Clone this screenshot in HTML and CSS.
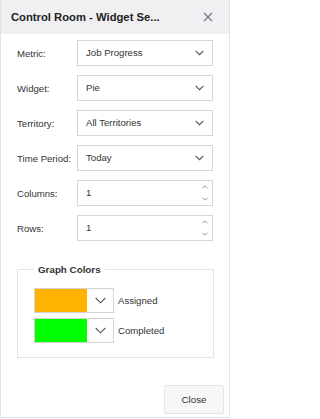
FILE: index.html
```html
<!DOCTYPE html>
<html>
<head>
<meta charset="utf-8">
<link rel="stylesheet" href="styles.css">
</head>
<body>
<div class="dialog">
  <div class="header">
    <span class="title">Control Room - Widget Se...</span>
    <svg class="close-x" width="10" height="10" viewBox="0 0 10 10"><path d="M1 1L9 9M9 1L1 9" stroke="#6f7c8e" stroke-width="1.2" fill="none"/></svg>
  </div>
  <div class="content">
    <div class="row">
      <span class="label">Metric:</span>
      <div class="field"><span class="value">Job Progress</span>
        <svg class="chev" width="9" height="6" viewBox="0 0 9 6"><path d="M0.6 0.8L4.5 4.7L8.4 0.8" stroke="#555" stroke-width="1.1" fill="none"/></svg></div>
    </div>
    <div class="row">
      <span class="label">Widget:</span>
      <div class="field"><span class="value">Pie</span>
        <svg class="chev" width="9" height="6" viewBox="0 0 9 6"><path d="M0.6 0.8L4.5 4.7L8.4 0.8" stroke="#555" stroke-width="1.1" fill="none"/></svg></div>
    </div>
    <div class="row">
      <span class="label">Territory:</span>
      <div class="field"><span class="value">All Territories</span>
        <svg class="chev" width="9" height="6" viewBox="0 0 9 6"><path d="M0.6 0.8L4.5 4.7L8.4 0.8" stroke="#555" stroke-width="1.1" fill="none"/></svg></div>
    </div>
    <div class="row">
      <span class="label">Time Period:</span>
      <div class="field"><span class="value">Today</span>
        <svg class="chev" width="9" height="6" viewBox="0 0 9 6"><path d="M0.6 0.8L4.5 4.7L8.4 0.8" stroke="#555" stroke-width="1.1" fill="none"/></svg></div>
    </div>
    <div class="row">
      <span class="label">Columns:</span>
      <div class="field"><span class="value">1</span>
        <div class="spin">
          <svg width="6" height="4" viewBox="0 0 6 4"><path d="M0.5 3.3L3 0.8L5.5 3.3" stroke="#888" stroke-width="0.9" fill="none"/></svg>
          <svg width="6" height="4" viewBox="0 0 6 4"><path d="M0.5 0.7L3 3.2L5.5 0.7" stroke="#888" stroke-width="0.9" fill="none"/></svg>
        </div></div>
    </div>
    <div class="row">
      <span class="label">Rows:</span>
      <div class="field"><span class="value">1</span>
        <div class="spin">
          <svg width="6" height="4" viewBox="0 0 6 4"><path d="M0.5 3.3L3 0.8L5.5 3.3" stroke="#888" stroke-width="0.9" fill="none"/></svg>
          <svg width="6" height="4" viewBox="0 0 6 4"><path d="M0.5 0.7L3 3.2L5.5 0.7" stroke="#888" stroke-width="0.9" fill="none"/></svg>
        </div></div>
    </div>
    <fieldset class="colors">
      <legend>Graph Colors</legend>
      <div class="color-row">
        <div class="picker"><span class="swatch orange"></span><span class="drop">
          <svg width="11" height="7" viewBox="0 0 11 7"><path d="M0.7 1L5.5 5.8L10.3 1" stroke="#555" stroke-width="1.1" fill="none"/></svg></span></div>
        <span class="clabel">Assigned</span>
      </div>
      <div class="color-row">
        <div class="picker"><span class="swatch green"></span><span class="drop">
          <svg width="11" height="7" viewBox="0 0 11 7"><path d="M0.7 1L5.5 5.8L10.3 1" stroke="#555" stroke-width="1.1" fill="none"/></svg></span></div>
        <span class="clabel">Completed</span>
      </div>
    </fieldset>
  </div>
  <div class="footer">
    <button class="close-btn">Close</button>
  </div>
</div>
</body>
</html>
```
FILE: styles.css
```css
html, body {
  margin: 0;
  padding: 0;
  background: #fff;
}
body {
  font-family: "Liberation Sans", Arial, sans-serif;
  color: #333;
}
.dialog {
  width: 230px;
  height: 418px;
  box-sizing: border-box;
  border: 1px solid #e2e3e8;
  border-top: none;
  display: flex;
  flex-direction: column;
  background: #fff;
}
.header {
  height: 34px;
  flex: none;
  background: #f0f0f2;
  display: flex;
  align-items: center;
  justify-content: space-between;
  padding: 0 16px 0 10px;
}
.title {
  font-weight: bold;
  font-size: 11.25px;
  color: #222;
}
.close-x {
  display: block;
}
.content {
  padding: 6px 16px 0 16px;
  display: flex;
  flex-direction: column;
  gap: 9px;
}
.row {
  display: flex;
  align-items: center;
  height: 26px;
}
.label {
  width: 60px;
  flex: none;
  font-size: 9.6px;
  color: #333;
}
.field {
  width: 136px;
  height: 26px;
  box-sizing: border-box;
  border: 1px solid #d6d6d9;
  display: flex;
  align-items: center;
  justify-content: space-between;
  padding: 0 8px 2px 8px;
  font-size: 9.6px;
  color: #333;
}
.chev {
  display: block;
  margin-top: 2px;
}
.spin {
  display: flex;
  flex-direction: column;
  gap: 8px;
  margin-right: -4px;
  margin-top: 2px;
}
.spin svg {
  display: block;
}
.colors {
  margin: 14px 0 0 0;
  width: 197px;
  box-sizing: border-box;
  border: 1px solid #e3e3e6;
  padding: 13px 16px 14px 16px;
  display: flex;
  flex-direction: column;
  gap: 5px;
}
.colors legend {
  font-size: 9.8px;
  font-weight: bold;
  padding: 0 4px;
  color: #333;
}
.color-row {
  display: flex;
  align-items: center;
  gap: 4px;
}
.picker {
  width: 80px;
  height: 25px;
  box-sizing: border-box;
  border: 1px solid #d3d3d6;
  display: flex;
}
.swatch {
  width: 52px;
  height: 100%;
}
.orange { background: #ffb300; }
.green { background: #00ff00; }
.drop {
  flex: 1;
  display: flex;
  align-items: center;
  justify-content: center;
  background: #fff;
}
.drop svg { display: block; }
.clabel {
  font-size: 9.6px;
  color: #333;
}
.footer {
  margin-top: auto;
  display: flex;
  justify-content: flex-end;
  padding: 0 5px 3px 0;
}
.close-btn {
  width: 60px;
  height: 29px;
  box-sizing: border-box;
  border: 1px solid #e4e4e6;
  background: #f7f7f8;
  border-radius: 2px;
  font-family: "Liberation Sans", Arial, sans-serif;
  font-size: 9.8px;
  color: #333;
  padding: 0;
}
```
